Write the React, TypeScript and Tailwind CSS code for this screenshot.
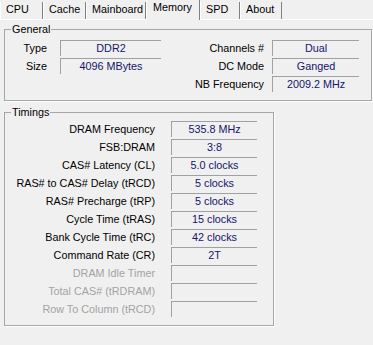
import React from "react";

type Tab = { name: string; width: string; active?: boolean };

const tabs: Tab[] = [
  { name: "CPU", width: "w-[43px]" },
  { name: "Cache", width: "w-[43px]" },
  { name: "Mainboard", width: "w-[60px]" },
  { name: "Memory", width: "w-[54px]", active: true },
  { name: "SPD", width: "w-[40px]" },
  { name: "About", width: "w-[42px]" },
];

const timings: { label: string; value: string; disabled?: boolean }[] = [
  { label: "DRAM Frequency", value: "535.8 MHz" },
  { label: "FSB:DRAM", value: "3:8" },
  { label: "CAS# Latency (CL)", value: "5.0 clocks" },
  { label: "RAS# to CAS# Delay (tRCD)", value: "5 clocks" },
  { label: "RAS# Precharge (tRP)", value: "5 clocks" },
  { label: "Cycle Time (tRAS)", value: "15 clocks" },
  { label: "Bank Cycle Time (tRC)", value: "42 clocks" },
  { label: "Command Rate (CR)", value: "2T" },
  { label: "DRAM Idle Timer", value: "", disabled: true },
  { label: "Total CAS# (tRDRAM)", value: "", disabled: true },
  { label: "Row To Column (tRCD)", value: "", disabled: true },
];

function Field({ value, width }: { value: string; width: string }) {
  return (
    <div
      className={`${width} h-[16px] shrink-0 border-t border-l border-[#a0a0a0] border-b-white border-r-white text-center leading-[14px] text-[#14146c]`}
    >
      {value}
    </div>
  );
}

function Row({
  label,
  value,
  labelWidth,
  gap,
  fieldWidth,
  disabled,
}: {
  label: string;
  value: string;
  labelWidth: string;
  gap: string;
  fieldWidth: string;
  disabled?: boolean;
}) {
  return (
    <div className={`flex h-[16px] items-center ${gap}`}>
      <div
        className={`${labelWidth} shrink-0 whitespace-nowrap text-right leading-[16px] ${
          disabled ? "text-[#a3a3a3]" : "text-black"
        }`}
      >
        {label}
      </div>
      <Field value={value} width={fieldWidth} />
    </div>
  );
}

function Group({
  title,
  className,
  children,
}: {
  title: string;
  className: string;
  children: React.ReactNode;
}) {
  return (
    <div
      className={`relative ml-[4px] border border-[#a6a6a6] shadow-[1px_1px_0_#ffffff] ${className}`}
    >
      <span className="absolute -top-[7px] left-[6px] bg-[#f0f0f0] px-[1px] leading-[13px] text-black">
        {title}
      </span>
      {children}
    </div>
  );
}

export default function App() {
  return (
    <div
      className="h-[345px] w-[373px] overflow-hidden bg-[#f0f0f0] text-[10.8px] text-black"
      style={{ fontFamily: '"Liberation Sans", Arial, sans-serif' }}
    >
      {/* tab strip */}
      <div className="flex h-[20px] items-start border-b border-white">
        {tabs.map((t) =>
          t.active ? (
            <div
              key={t.name}
              className={`${t.width} relative z-10 h-[20px] border-l border-white border-r border-r-[#808080] bg-[#f0f0f0] pl-[6px] pt-[1px] leading-[13px]`}
            >
              {t.name}
            </div>
          ) : (
            <div
              key={t.name}
              className={`${t.width} mt-[2px] h-[17px] border-l border-white border-r border-r-[#808080] pl-[5px] pt-[1px] leading-[13px]`}
            >
              {t.name}
            </div>
          )
        )}
      </div>

      <Group title="General" className="mt-[9px] h-[72px] w-[368px]">
        <div className="flex pt-[10px]">
          <div className="flex flex-col gap-[2px]">
            <Row label="Type" value="DDR2" labelWidth="w-[42px]" gap="gap-[13px]" fieldWidth="w-[101px]" />
            <Row label="Size" value="4096 MBytes" labelWidth="w-[42px]" gap="gap-[13px]" fieldWidth="w-[101px]" />
          </div>
          <div className="flex flex-col gap-[2px]">
            <Row label="Channels #" value="Dual" labelWidth="w-[103px]" gap="gap-[8px]" fieldWidth="w-[87px]" />
            <Row label="DC Mode" value="Ganged" labelWidth="w-[103px]" gap="gap-[8px]" fieldWidth="w-[87px]" />
            <Row label="NB Frequency" value="2009.2 MHz" labelWidth="w-[103px]" gap="gap-[8px]" fieldWidth="w-[87px]" />
          </div>
        </div>
      </Group>

      <Group title="Timings" className="mt-[11px] h-[214px] w-[270px]">
        <div className="flex flex-col gap-[2px] pt-[8px]">
          {timings.map((r) => (
            <Row
              key={r.label}
              label={r.label}
              value={r.value}
              disabled={r.disabled}
              labelWidth="w-[150px]"
              gap="gap-[16px]"
              fieldWidth="w-[86px]"
            />
          ))}
        </div>
      </Group>
    </div>
  );
}
